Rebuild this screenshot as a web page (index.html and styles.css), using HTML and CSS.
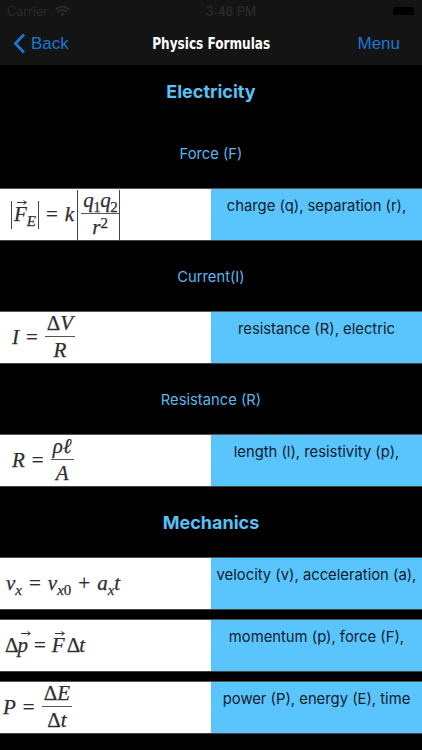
FILE: index.html
```html
<!DOCTYPE html>
<html lang="en">
<head>
<meta charset="utf-8">
<title>Physics Formulas</title>
<link rel="stylesheet" href="styles.css">
</head>
<body>
<svg class="defs" width="0" height="0"><symbol id="arrow" viewBox="0 0 10 5"><path d="M0 2.5h8.5M6.5 .6 9.5 2.5 6.5 4.4" fill="none" stroke="currentColor" stroke-width="1"/></symbol></svg>
<div class="screen">
  <header class="top">
    <div class="status">
      <div class="status-left">
        <span>Carrier</span>
        <svg class="wifi" viewBox="0 0 16 12" width="15" height="11"><path d="M8 11.5 5.6 8.9a3.4 3.4 0 0 1 4.8 0zM3.9 7.2l-1.5-1.6a8 8 0 0 1 11.2 0l-1.5 1.6a5.8 5.8 0 0 0-8.2 0zM1.4 4.6 0 3.1a11.4 11.4 0 0 1 16 0l-1.4 1.5a9.4 9.4 0 0 0-13.2 0z"/></svg>
      </div>
      <span class="time">3:48 PM</span>
      <div class="battery"><span class="battery-fill"></span></div>
    </div>
    <nav class="nav">
      <a class="nav-back">
        <svg viewBox="0 0 13 21" width="13" height="21"><path d="M11 1.5 2.5 10.5l8.5 9" fill="none" stroke="currentColor" stroke-width="2.8"/></svg>
        <span>Back</span>
      </a>
      <span class="nav-title">Physics Formulas</span>
      <a class="nav-menu">Menu</a>
    </nav>
  </header>

  <main>
    <h2 class="heading heading-first">Electricity</h2>
    <h3 class="label">Force (F)</h3>
    <div class="row">
      <div class="formula f-force">
        <span class="bars"><span class="line"><span class="vec"><svg class="arrow"><use href="#arrow"/></svg><i>F</i></span><sub><i>E</i></sub></span></span>
        <span class="eq">=</span>
        <i>k</i>
        <span class="bars bars-tall"><span class="frac"><span class="num tight"><i>q</i><sub>1</sub><i>q</i><sub>2</sub></span><span class="den"><i>r</i><sup>2</sup></span></span></span>
      </div>
      <div class="desc">charge (q), separation (r),</div>
    </div>

    <h3 class="label">Current(I)</h3>
    <div class="row">
      <div class="formula f-current">
        <i>I</i><span class="eq">=</span>
        <span class="frac"><span class="num">Δ<i>V</i></span><span class="den"><i>R</i></span></span>
      </div>
      <div class="desc">resistance (R), electric</div>
    </div>

    <h3 class="label">Resistance (R)</h3>
    <div class="row">
      <div class="formula f-current">
        <i>R</i><span class="eq">=</span>
        <span class="frac"><span class="num"><i>ρℓ</i></span><span class="den"><i>A</i></span></span>
      </div>
      <div class="desc">length (l), resistivity (p),</div>
    </div>

    <h2 class="heading">Mechanics</h2>
    <div class="row">
      <div class="formula f-velocity">
        <span class="line"><i>v</i><sub><i>x</i></sub><span class="eq">=</span><i>v</i><sub><i>x</i>0</sub><span class="eq">+</span><i>a</i><sub><i>x</i></sub><i>t</i></span>
      </div>
      <div class="desc">velocity (v), acceleration (a),</div>
    </div>
    <div class="row row-close">
      <div class="formula f-momentum">
        <span class="line">Δ<span class="vec"><svg class="arrow"><use href="#arrow"/></svg><i>p</i></span><span class="eq">=</span><span class="vec"><svg class="arrow"><use href="#arrow"/></svg><i>F</i></span><span class="gap">Δ<i>t</i></span></span>
      </div>
      <div class="desc">momentum (p), force (F),</div>
    </div>
    <div class="row row-close">
      <div class="formula f-power">
        <i>P</i><span class="eq">=</span>
        <span class="frac"><span class="num">Δ<i>E</i></span><span class="den">Δ<i>t</i></span></span>
      </div>
      <div class="desc">power (P), energy (E), time</div>
    </div>
  </main>
</div>
</body>
</html>
```
FILE: styles.css
```css
* { box-sizing: border-box; }
html, body { margin: 0; height: 100%; background: #000; }
.defs { display: block; height: 0; }
.screen { width: 422px; height: 750px; overflow: hidden; background: #000; font-family: Inter, "Liberation Sans", sans-serif; }

.top { height: 65px; background: #141414; }
.status { height: 22px; display: flex; align-items: center; justify-content: space-between; padding: 0 7px; color: #2b2b2b; font-size: 12.5px; }
.status-left { display: flex; align-items: center; gap: 7px; }
.wifi { fill: #2b2b2b; display: block; }
.time { font-weight: 500; font-size: 12.5px; }
.battery { width: 23px; height: 10px; border-radius: 2px; padding: 1px; display: flex; }
.battery-fill { flex: 1; background: #000; border-radius: 1.5px; }

.nav { height: 43px; display: grid; grid-template-columns: 1fr auto 1fr; align-items: center; padding: 0 22px; font-family: "Liberation Sans", sans-serif; font-size: 17px; color: #1c76d2; }
.nav-back { display: flex; align-items: center; gap: 5px; margin-left: -9px; }
.nav-back svg { display: block; }
.nav-title { color: #fff; font-family: "DejaVu Sans", sans-serif; font-stretch: condensed; font-weight: 700; font-size: 16px; white-space: nowrap; transform: scaleX(.84); }
.nav-menu { justify-self: end; }

.heading { margin: 0; height: 72px; display: flex; align-items: center; justify-content: center; color: #5ac0f5; font-size: 18px; font-weight: 700; }
.heading-first { height: 52px; }
.label { margin: 0; height: 72px; padding-top: 1px; display: flex; align-items: center; justify-content: center; color: #5ab8ee; font-size: 14.75px; line-height: 18px; font-weight: 400; }

.row { height: 51px; display: grid; grid-template-columns: 211px 211px; box-shadow: 0 -1px 0 #555, 0 1px 0 #444; }
.row-close { margin-top: 11px; }

.formula { background: #fff; display: flex; align-items: center; color: #2e2e2e; font-family: "Liberation Serif", serif; font-size: 21px; overflow: hidden; line-height: 1; white-space: nowrap; -webkit-text-stroke: .25px #2e2e2e; }
.f-force { padding-left: 11px; }
.f-current { padding-left: 12px; }
.f-velocity { padding-left: 6px; }
.f-momentum { padding-left: 5px; letter-spacing: -1px; }
.f-power { padding-left: 3px; }

.line { display: block; }
.formula sub { font-size: 15px; vertical-align: -5px; line-height: 0; }
.formula sup { font-size: 15px; vertical-align: 6px; line-height: 0; }
.eq { margin: 0 7px; font-style: normal; }
.gap { margin-left: 3px; }
.vec { position: relative; display: inline-block; }
.arrow { position: absolute; left: 3px; top: -4px; width: 10px; height: 5px; color: #333; }
.bars { display: inline-flex; align-items: center; border-left: 1px solid #444; border-right: 1px solid #444; padding: 0 2px; height: 28px; }
.bars-tall { height: 50px; margin-left: 3px; padding: 0 0 0 3px; }
.frac { display: inline-flex; flex-direction: column; align-items: center; margin-top: -1px; }
.num { padding: 0 2px 2px; border-bottom: 1px solid #555; }
.tight { letter-spacing: -.5px; }
.den { padding-top: 3px; }

.desc { background: #5ac4fd; color: #10202c; font-size: 14.8px; line-height: 18px; text-align: center; padding-top: 8px; white-space: nowrap; overflow: hidden; }
```
